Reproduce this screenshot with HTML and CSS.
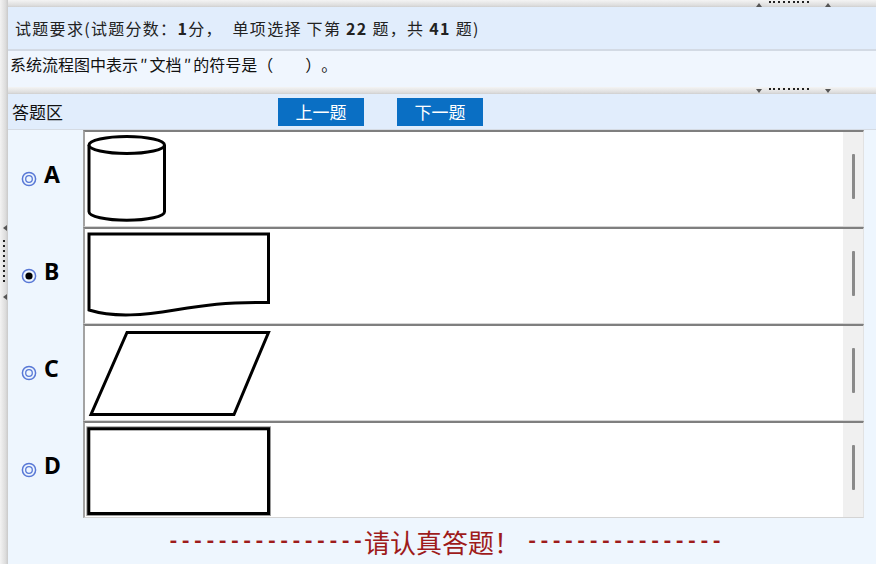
FILE: index.html
```html
<!DOCTYPE html>
<html lang="zh-CN">
<head>
<meta charset="utf-8">
<title>答题</title>
<link rel="stylesheet" href="styles.css">
</head>
<body>
<div class="vsplit">
  <span class="tri-l"></span>
  <span class="vdots"><i></i><i></i><i></i><i></i><i></i><i></i><i></i><i></i><i></i></span>
  <span class="tri-l"></span>
</div>
<div class="main">
  <div class="hsplit">
    <span class="tri-up"></span>
    <span class="hdots"><i></i><i></i><i></i><i></i><i></i><i></i><i></i><i></i><i></i></span>
    <span class="tri-up"></span>
  </div>
  <div class="header">试题要求(试题分数：<b>1</b>分，&nbsp;&nbsp;单项选择 下第 <b>22</b> 题，共 <b>41</b> 题)</div>
  <div class="divider"></div>
  <div class="question">系统流程图中表示<span class="q">″</span>文档<span class="q">″</span>的符号是（　　）。</div>
  <div class="hsplit">
    <span class="tri-down"></span>
    <span class="hdots"><i></i><i></i><i></i><i></i><i></i><i></i><i></i><i></i><i></i></span>
    <span class="tri-down"></span>
  </div>
  <div class="answerbar">
    <span class="area-label">答题区</span>
    <span class="btn">上一题</span>
    <span class="btn">下一题</span>
  </div>
  <div class="line"></div>
  <div class="options">
    <div class="opt">
      <div class="label">
        <svg class="radio" width="16" height="16" viewBox="0 0 16 16"><circle cx="8" cy="8" r="6.6" fill="none" stroke="#5878d6" stroke-width="1.5"/><circle cx="8" cy="8" r="3.3" fill="none" stroke="#5878d6" stroke-width="1.3"/></svg>
        <span class="letter">A</span>
      </div>
      <div class="box">
        <div class="shape">
          <svg width="190" height="94" viewBox="0 0 190 94">
            <path d="M4,13 V79.7 A37.75,8.5 0 0 0 79.5,79.7 V13" fill="#fff" stroke="#000" stroke-width="3"/>
            <ellipse cx="41.75" cy="13" rx="37.75" ry="8.5" fill="#fff" stroke="#000" stroke-width="3"/>
          </svg>
        </div>
        <div class="scroll"><div class="thumb"></div></div>
      </div>
    </div>
    <div class="opt">
      <div class="label">
        <svg class="radio" width="16" height="16" viewBox="0 0 16 16"><circle cx="8" cy="8" r="6.6" fill="none" stroke="#5878d6" stroke-width="1.5"/><circle cx="8" cy="8" r="3.6" fill="#000"/></svg>
        <span class="letter">B</span>
      </div>
      <div class="box">
        <div class="shape">
          <svg width="190" height="94" viewBox="0 0 190 94">
            <path d="M4,5 H183.5 V73.5 C140,73 120,76 90,81 S30,89 4,81 Z" fill="#fff" stroke="#000" stroke-width="3" stroke-linejoin="miter"/>
          </svg>
        </div>
        <div class="scroll"><div class="thumb"></div></div>
      </div>
    </div>
    <div class="opt">
      <div class="label">
        <svg class="radio" width="16" height="16" viewBox="0 0 16 16"><circle cx="8" cy="8" r="6.6" fill="none" stroke="#5878d6" stroke-width="1.5"/><circle cx="8" cy="8" r="3.3" fill="none" stroke="#5878d6" stroke-width="1.3"/></svg>
        <span class="letter">C</span>
      </div>
      <div class="box">
        <div class="shape">
          <svg width="190" height="94" viewBox="0 0 190 94">
            <path d="M42,6.5 H183.5 L149,88.5 H6 Z" fill="#fff" stroke="#000" stroke-width="3" stroke-linejoin="miter"/>
          </svg>
        </div>
        <div class="scroll"><div class="thumb"></div></div>
      </div>
    </div>
    <div class="opt">
      <div class="label">
        <svg class="radio" width="16" height="16" viewBox="0 0 16 16"><circle cx="8" cy="8" r="6.6" fill="none" stroke="#5878d6" stroke-width="1.5"/><circle cx="8" cy="8" r="3.3" fill="none" stroke="#5878d6" stroke-width="1.3"/></svg>
        <span class="letter">D</span>
      </div>
      <div class="box">
        <div class="shape">
          <svg width="190" height="94" viewBox="0 0 190 94">
            <rect x="3.8" y="5.8" width="179.7" height="84.7" fill="none" stroke="#9a9a9a" stroke-width="5"/>
            <rect x="3.8" y="5.8" width="179.7" height="84.7" fill="#fff" stroke="#000" stroke-width="3"/>
          </svg>
        </div>
        <div class="scroll"><div class="thumb"></div></div>
      </div>
    </div>
  </div>
  <div class="footer"><span class="dash">----------------</span>请认真答题！ <span class="dash">----------------</span></div>
</div>
</body>
</html>
```
FILE: styles.css
```css
html, body {
  margin: 0;
  padding: 0;
}
body {
  width: 876px;
  height: 564px;
  overflow: hidden;
  display: flex;
  font-family: "Noto Sans CJK SC", "Noto Sans", sans-serif;
  color: #1a1a1a;
  background: #eef6fe;
  text-spacing-trim: space-all;
}
.vsplit {
  width: 8px;
  flex: none;
  background: linear-gradient(to right, #f3f3f3, #dcdcdc 70%, #c9c9c9);
  display: flex;
  flex-direction: column;
  align-items: center;
  padding-top: 225px;
  box-sizing: border-box;
}
.tri-l {
  width: 0;
  height: 0;
  border-top: 3px solid transparent;
  border-bottom: 3px solid transparent;
  border-right: 4px solid #555;
  margin-left: 2px;
}
.vdots {
  display: flex;
  flex-direction: column;
  gap: 3px;
  margin: 9px 0 12px;
}
.vdots i, .hdots i {
  display: block;
  width: 2px;
  height: 2px;
  background: #222;
}
.main {
  flex: 1;
  display: flex;
  flex-direction: column;
  min-width: 0;
}
.hsplit {
  height: 7px;
  flex: none;
  background: linear-gradient(#f4f4f4, #dedede 75%, #cfcfcf);
  display: flex;
  justify-content: flex-end;
  align-items: center;
  padding-right: 45px;
}
.tri-up, .tri-down {
  width: 0;
  height: 0;
  border-left: 3.5px solid transparent;
  border-right: 3.5px solid transparent;
}
.tri-up {
  border-bottom: 4px solid #555;
  align-self: flex-end;
}
.tri-down {
  border-top: 4px solid #555;
  align-self: flex-end;
  margin-bottom: 1px;
}
.hdots {
  display: flex;
  gap: 2.8px;
  margin: 0 16px 0 7px;
  align-self: flex-start;
  margin-top: 1px;
}
.header {
  height: 42px;
  flex: none;
  background: #e1edfc;
  display: flex;
  align-items: center;
  padding-left: 7px;
  font-size: 16px;
  letter-spacing: 1.3px;
  color: #222;
  white-space: pre;
}
.header b {
  font-weight: 700;
}
.divider {
  height: 2px;
  flex: none;
  background: #d3dae4;
}
.question {
  height: 36px;
  flex: none;
  box-sizing: border-box;
  background: #f0f6fe;
  padding: 1px 0 0 2px;
  font-size: 16px;
  line-height: 24px;
  color: #111;
  white-space: pre;
}
.q {
  padding: 0 2px;
}
.answerbar {
  height: 35px;
  flex: none;
  background: #e1edfc;
  display: flex;
  align-items: center;
  padding-left: 4px;
}
.area-label {
  width: 266px;
  font-size: 17px;
  color: #111;
}
.btn {
  width: 86px;
  height: 28px;
  background: #0a6fc4;
  color: #fff;
  font-size: 17px;
  display: flex;
  align-items: center;
  justify-content: center;
  margin-right: 33px;
}
.line {
  height: 1px;
  flex: none;
  background: #d5dbe3;
}
.options {
  display: flex;
  flex-direction: column;
  padding-right: 12px;
}
.opt {
  height: 97px;
  display: flex;
}
.label {
  width: 75px;
  flex: none;
  display: flex;
  align-items: flex-start;
  padding-left: 13px;
  box-sizing: border-box;
  gap: 7px;
}
.radio {
  display: block;
  margin-top: 41px;
}
.letter {
  font-family: "Noto Sans", sans-serif;
  font-weight: 700;
  font-size: 23px;
  line-height: 1;
  margin-top: 33px;
  color: #000;
}
.box {
  flex: 1;
  display: flex;
  background: #fff;
  border-top: 2px solid #7f7f7f;
  border-left: 2px solid #a3a3a3;
  border-bottom: 1px solid #d4d4d4;
  border-right: 1px solid #e2e2e2;
}
.shape {
  flex: 1;
}
.shape svg {
  display: block;
}
.scroll {
  width: 20px;
  background: #f0f0f0;
  display: flex;
  justify-content: center;
}
.thumb {
  width: 3px;
  height: 45px;
  margin-top: 22px;
  background: #8a8a8a;
  border-radius: 1px;
}
.footer {
  flex: 1;
  display: flex;
  justify-content: center;
  align-items: center;
  padding-left: 6px;
  font-size: 26px;
  color: #9e1b1b;
  white-space: pre;
}
.dash {
  font-family: "Liberation Mono", monospace;
  font-size: 20.5px;
  font-weight: 700;
}
```
